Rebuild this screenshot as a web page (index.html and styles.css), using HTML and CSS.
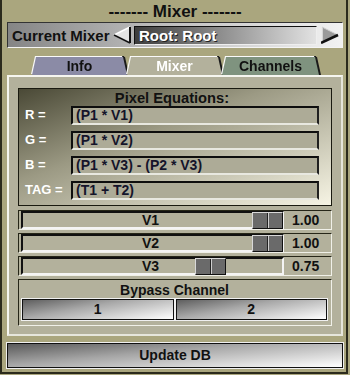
FILE: index.html
```html
<!DOCTYPE html>
<html>
<head>
<meta charset="utf-8">
<link rel="stylesheet" href="styles.css">
</head>
<body>
<div class="frame">
  <div class="title">------- Mixer -------</div>

  <div class="selector">
    <span class="sel-label">Current Mixer</span>
    <svg class="arrow" width="18" height="18" viewBox="0 0 18 18">
      <polygon points="1,9 17,1 17,17" fill="#e4e4e4"/>
      <line x1="1" y1="9" x2="17" y2="1" stroke="#fff" stroke-width="1.5"/>
      <line x1="17" y1="1" x2="17" y2="17" stroke="#111" stroke-width="2"/>
      <line x1="1" y1="9" x2="17" y2="17" stroke="#111" stroke-width="1.5"/>
    </svg>
    <div class="sel-field">Root: Root</div>
    <svg class="arrow" width="18" height="18" viewBox="0 0 18 18">
      <polygon points="1,1 17,9 1,17" fill="#9a9a9a"/>
      <line x1="1" y1="1" x2="1" y2="16" stroke="#e8e8e8" stroke-width="1.5"/>
      <line x1="1" y1="1" x2="17" y2="9" stroke="#d0d0d0" stroke-width="1"/>
      <line x1="0" y1="17" x2="17" y2="9" stroke="#111" stroke-width="2.5"/>
    </svg>
  </div>

  <div class="tabs">
    <div class="tab-wrap"><div class="tab tab-info">Info</div></div>
    <div class="tab-wrap"><div class="tab tab-active">Mixer</div></div>
    <div class="tab-wrap"><div class="tab tab-channels">Channels</div></div>
  </div>

  <div class="panel">
    <div class="equations">
      <div class="eq-title">Pixel Equations:</div>
      <div class="eq-row"><span class="eq-label">R =</span><div class="eq-field">(P1 * V1)</div></div>
      <div class="eq-row"><span class="eq-label">G =</span><div class="eq-field">(P1 * V2)</div></div>
      <div class="eq-row"><span class="eq-label">B =</span><div class="eq-field">(P1 * V3) - (P2 * V3)</div></div>
      <div class="eq-row"><span class="eq-label">TAG =</span><div class="eq-field">(T1 + T2)</div></div>
    </div>

    <div class="slider-row">
      <div class="track"><span class="track-label">V1</span><span class="thumb" style="left: 229px"></span></div>
      <span class="value">1.00</span>
    </div>
    <div class="slider-row">
      <div class="track"><span class="track-label">V2</span><span class="thumb" style="left: 229px"></span></div>
      <span class="value">1.00</span>
    </div>
    <div class="slider-row">
      <div class="track"><span class="track-label">V3</span><span class="thumb" style="left: 172px"></span></div>
      <span class="value">0.75</span>
    </div>

    <div class="bypass">
      <div class="bypass-title">Bypass Channel</div>
      <div class="bypass-buttons">
        <div class="btn">1</div>
        <div class="btn">2</div>
      </div>
    </div>
  </div>

  <div class="btn update">Update DB</div>
</div>
</body>
</html>
```

FILE: styles.css
```css
* { box-sizing: border-box; }
html, body { margin: 0; padding: 0; }
body {
  width: 350px;
  height: 375px;
  background: #aaa67e;
  font-family: "Liberation Sans", Arial, sans-serif;
  font-weight: bold;
  color: #111;
  overflow: hidden;
}
.frame {
  width: 348px;
  height: 374px;
  border-left: 2px solid #2b2a1c;
  border-right: 2px solid #2b2a1c;
  border-bottom: 2px solid #2b2a1c;
  padding: 0 3px 0 5px;
  display: flex;
  flex-direction: column;
}
.title {
  height: 22px;
  line-height: 24px;
  font-size: 17px;
  text-align: center;
}
.selector {
  height: 26px;
  display: flex;
  align-items: center;
  border: 1px solid;
  border-color: #333 #f4f4f4 #f4f4f4 #333;
  background: linear-gradient(to right, #858585 0%, #b8b8b8 40%, #f2f2f2 100%);
  padding: 0 3px 0 4px;
}
.sel-label {
  font-size: 15px;
  width: 101px;
}
.arrow { flex: 0 0 auto; display: block; }
.sel-field {
  margin: 0 4px 0 3px;
  flex: 1;
  height: 19px;
  line-height: 17px;
  border: 1px solid;
  border-color: #111 #eee #eee #111;
  background: linear-gradient(to right, #3c3c3c 0%, #8a8a8a 45%, #e2e2e2 100%);
  color: #fff;
  font-size: 15px;
  padding-left: 4px;
  text-shadow: 1px 1px 0 #222;
}
.tabs {
  margin-top: 8px;
  height: 19px;
  display: flex;
  padding-left: 25px;
  gap: 0;
}
.tab-wrap {
  filter: drop-shadow(-1px -1px 0 #fafafa) drop-shadow(2px 0 0 #1a1a1a);
  margin-top: 1px;
}
.tab {
  width: 95px;
  height: 18px;
  clip-path: polygon(4px 0, calc(100% - 4px) 0, 100% 100%, 0 100%);
  text-align: center;
  font-size: 14px;
  line-height: 19px;
}
.tab-info { background: #8b8ba6; }
.tab-active { background: #b3b19c; color: #fff; }
.tab-channels { background: #7f937f; width: 97px; }
.panel {
  height: 261px;
  border: 2px solid;
  border-color: #f6f6f0 #e6e6dc #e6e6dc #f6f6f0;
  background: #b3b19c;
  padding: 11px 9px 0 9px;
  display: flex;
  flex-direction: column;
}
.equations {
  height: 118px;
  border: 1px solid #1a1a10;
  background: linear-gradient(to bottom right, #4a4936 0%, #9c9a84 40%, #f6f4e4 100%);
  padding: 1px 12px 0 6px;
}
.eq-title {
  text-align: center;
  font-size: 14.7px;
  height: 16px;
  line-height: 16px;
}
.eq-row {
  display: flex;
  align-items: flex-start;
  height: 25px;
}
.eq-label {
  width: 46px;
  color: #fff;
  font-size: 13px;
  line-height: 18px;
}
.eq-field {
  flex: 1;
  height: 19px;
  border: 2px solid;
  border-color: #0e0e0e #202020 #e8e8e0 #0e0e0e;
  background: #adab97;
  font-size: 14px;
  line-height: 15px;
  padding-left: 3px;
  color: #14142a;
}
.slider-row {
  margin-top: 4px;
  height: 20px;
  display: flex;
  align-items: center;
  border: 1px solid;
  border-color: #262618 #f0f0e8 #f0f0e8 #262618;
  padding: 0 0 0 2px;
  margin-bottom: -1px;
}
.track {
  position: relative;
  width: 263px;
  height: 18px;
  border: 2px solid;
  border-color: #111 #f4f4f4 #f4f4f4 #111;
  text-align: center;
  font-size: 14px;
  line-height: 14px;
  padding-right: 4px;
}
.thumb {
  position: absolute;
  top: -1px;
  width: 31px;
  height: 17px;
  background: #6a6a6a;
  border: 1px solid;
  border-color: #d8d8d8 #111 #111 #d8d8d8;
}
.thumb::after {
  content: "";
  position: absolute;
  left: 14px;
  top: 0;
  width: 1px;
  height: 15px;
  background: #cfcfcf;
  border-left: 1px solid #222;
}
.value {
  margin-left: 8px;
  font-size: 14px;
}
.bypass {
  margin-top: 4px;
  height: 47px;
  border: 1px solid;
  border-color: #262618 #f0f0e8 #f0f0e8 #262618;
  padding: 2px 4px 0 3px;
}
.bypass-title {
  text-align: center;
  font-size: 14px;
  height: 17px;
  line-height: 17px;
}
.bypass-buttons {
  display: flex;
  gap: 2px;
}
.btn {
  flex: 1;
  height: 21px;
  border: 1px solid #111;
  box-shadow: 0 0 0 1px #f0f0f0;
  background: linear-gradient(170deg, #5e5e5e 0%, #a8a8a8 40%, #ffffff 100%);
  text-align: center;
  font-size: 14px;
  line-height: 19px;
}
.update {
  flex: none;
  margin-top: 7px;
  height: 25px;
  line-height: 23px;
  background: linear-gradient(175deg, #5a5a5a 0%, #a5a5a5 40%, #ffffff 100%);
}
```
